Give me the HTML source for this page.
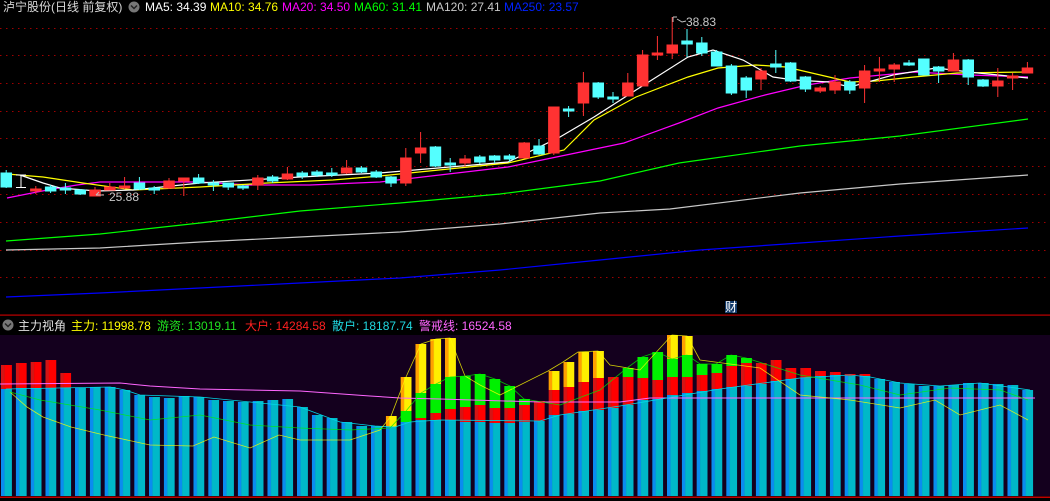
<!DOCTYPE html>
<html><head><meta charset="utf-8">
<style>
html,body{margin:0;padding:0;background:#000;width:1050px;height:501px;overflow:hidden}
svg{display:block}
text{font-family:"Liberation Sans","Noto Sans CJK SC",sans-serif;font-size:12px}
</style></head><body>
<svg width="1050" height="501" viewBox="0 0 1050 501" xmlns="http://www.w3.org/2000/svg">
<defs>
<pattern id="pc" x="1" y="0" width="14.8" height="501" patternUnits="userSpaceOnUse"><rect x="0" y="0" width="3.5" height="501" fill="#0a8cf0"/><rect x="3.5" y="0" width="7.5" height="501" fill="#00b8c8"/></pattern>
<pattern id="pr" x="1" y="0" width="14.8" height="501" patternUnits="userSpaceOnUse"><rect x="0" y="0" width="3.5" height="501" fill="#d41414"/><rect x="3.5" y="0" width="7.5" height="501" fill="#ff0000"/></pattern>
<pattern id="pg" x="1" y="0" width="14.8" height="501" patternUnits="userSpaceOnUse"><rect x="0" y="0" width="11" height="501" fill="#00f000"/></pattern>
<pattern id="py" x="1" y="0" width="14.8" height="501" patternUnits="userSpaceOnUse"><rect x="0" y="0" width="3.5" height="501" fill="#ffa000"/><rect x="3.5" y="0" width="7.5" height="501" fill="#ffee00"/></pattern>
</defs>
<rect width="1050" height="501" fill="#000"/>
<text x="3" y="11" fill="#d8d8d8">泸宁股份(日线 前复权)</text>
<circle cx="134" cy="7" r="5.5" fill="#777"/><path d="M131 5.5 L134 8.5 L137 5.5" stroke="#222" stroke-width="1.5" fill="none"/>
<text x="145" y="11" fill="#fff">MA5: 34.39</text>
<text x="210" y="11" fill="#ffff00">MA10: 34.76</text>
<text x="282" y="11" fill="#ff00ff">MA20: 34.50</text>
<text x="354" y="11" fill="#00ff00">MA60: 31.41</text>
<text x="426" y="11" fill="#c8c8c8">MA120: 27.41</text>
<text x="504" y="11" fill="#0022ff">MA250: 23.57</text>
<g stroke="#a00000" stroke-width="1" stroke-dasharray="1.5,4.5">
<line x1="0" y1="28.5" x2="1050" y2="28.5"/><line x1="0" y1="55.5" x2="1050" y2="55.5"/><line x1="0" y1="83.5" x2="1050" y2="83.5"/><line x1="0" y1="111.5" x2="1050" y2="111.5"/><line x1="0" y1="138.5" x2="1050" y2="138.5"/><line x1="0" y1="166.5" x2="1050" y2="166.5"/><line x1="0" y1="194.5" x2="1050" y2="194.5"/><line x1="0" y1="222.5" x2="1050" y2="222.5"/><line x1="0" y1="250.5" x2="1050" y2="250.5"/><line x1="0" y1="277.5" x2="1050" y2="277.5"/>
</g>
<g fill="none" stroke-width="1.2">
<polyline stroke="#0000ff" points="6,297 100,293 200,288 300,283 400,278 500,270 600,260 700,250 800,243 900,236 1028,228"/>
<polyline stroke="#c8c8c8" points="6,250 100,248 200,242 300,237 400,232 500,224 600,213 670,209 800,193 900,184 1028,175"/>
<polyline stroke="#00ff00" points="6,241 100,234 200,223 300,211 400,203 500,194 600,181 679,163 800,146 900,136 1028,119"/>
<polyline stroke="#ff00ff" points="7,198 37,192 53,189 77,185 100,182 200,182 250,185 310,185 380,182 508,167 542,160 624,143 679,123 718,108 765,95 807,85 850,78 914,72 970,75 1028,77"/>
<polyline stroke="#ffff00" points="7,174 43,177 83,183 133,190 200,187 267,183 333,180 380,176 508,163 564,150 594,120 636,97 688,77 718,68 756,65 786,67 829,77 850,82 876,81 914,77 957,73 1028,72"/>
<polyline stroke="#ffffff" points="20,175 43,183 60,188 97,191 133,190 200,183 300,177 380,173 508,162 560,137 594,117 636,90 688,57 713,50 743,60 773,77 794,80 829,82 850,87 893,75 936,68 978,73 1028,78"/>
</g>
<g stroke-width="1">
<g fill="#54ffff" stroke="#54ffff">
<line x1="6.2" y1="170" x2="6.2" y2="188"/><rect x="1" y="173" width="10.5" height="14"/>
<line x1="50.6" y1="185" x2="50.6" y2="193"/><rect x="45.4" y="187" width="10.5" height="4"/>
<line x1="65.4" y1="183" x2="65.4" y2="194"/><rect x="60.2" y="188" width="10.5" height="2"/>
<line x1="80.2" y1="189" x2="80.2" y2="195"/><rect x="75" y="190" width="10.5" height="4"/>
<line x1="139.4" y1="177" x2="139.4" y2="190"/><rect x="134.2" y="183" width="10.5" height="6"/>
<line x1="154.2" y1="186" x2="154.2" y2="194"/><rect x="149" y="188" width="10.5" height="2"/>
<line x1="198.6" y1="174" x2="198.6" y2="184"/><rect x="193.4" y="178" width="10.5" height="5"/>
<line x1="213.4" y1="180" x2="213.4" y2="191"/><rect x="208.2" y="183" width="10.5" height="2"/>
<line x1="228.2" y1="183" x2="228.2" y2="190"/><rect x="223" y="183" width="10.5" height="4"/>
<line x1="243" y1="185" x2="243" y2="190"/><rect x="237.8" y="186" width="10.5" height="2"/>
<line x1="272.6" y1="175" x2="272.6" y2="183"/><rect x="267.4" y="177" width="10.5" height="4"/>
<line x1="302.2" y1="171" x2="302.2" y2="179"/><rect x="297" y="173" width="10.5" height="3"/>
<line x1="317" y1="170" x2="317" y2="177"/><rect x="311.8" y="172" width="10.5" height="3"/>
<line x1="331.8" y1="168" x2="331.8" y2="177"/><rect x="326.6" y="173" width="10.5" height="2"/>
<line x1="361.4" y1="166" x2="361.4" y2="173"/><rect x="356.2" y="168" width="10.5" height="4"/>
<line x1="376.2" y1="170" x2="376.2" y2="178"/><rect x="371" y="172" width="10.5" height="5"/>
<line x1="391" y1="176" x2="391" y2="187"/><rect x="385.8" y="177" width="10.5" height="6"/>
<line x1="435.4" y1="146" x2="435.4" y2="167"/><rect x="430.2" y="147" width="10.5" height="19"/>
<line x1="450.2" y1="158" x2="450.2" y2="172"/><rect x="445" y="163" width="10.5" height="2"/>
<line x1="479.8" y1="155" x2="479.8" y2="164"/><rect x="474.6" y="157" width="10.5" height="5"/>
<line x1="494.6" y1="155" x2="494.6" y2="163"/><rect x="489.4" y="156" width="10.5" height="4"/>
<line x1="509.4" y1="154" x2="509.4" y2="162"/><rect x="504.2" y="156" width="10.5" height="3"/>
<line x1="539" y1="139" x2="539" y2="155"/><rect x="533.8" y="146" width="10.5" height="8"/>
<line x1="568.6" y1="106" x2="568.6" y2="117"/><rect x="563.4" y="109" width="10.5" height="2"/>
<line x1="598.2" y1="82" x2="598.2" y2="99"/><rect x="593" y="83" width="10.5" height="14"/>
<line x1="613" y1="92" x2="613" y2="103"/><rect x="607.8" y="97" width="10.5" height="2"/>
<line x1="687" y1="29" x2="687" y2="57"/><rect x="681.8" y="41" width="10.5" height="3"/>
<line x1="701.8" y1="37" x2="701.8" y2="56"/><rect x="696.6" y="43" width="10.5" height="10"/>
<line x1="716.6" y1="50" x2="716.6" y2="66"/><rect x="711.4" y="52" width="10.5" height="14"/>
<line x1="731.4" y1="64" x2="731.4" y2="95"/><rect x="726.2" y="66" width="10.5" height="27"/>
<line x1="746.2" y1="76" x2="746.2" y2="98"/><rect x="741" y="78" width="10.5" height="12"/>
<line x1="775.8" y1="50" x2="775.8" y2="73"/><rect x="770.6" y="64" width="10.5" height="3"/>
<line x1="790.6" y1="62" x2="790.6" y2="82"/><rect x="785.4" y="63" width="10.5" height="18"/>
<line x1="805.4" y1="76" x2="805.4" y2="92"/><rect x="800.2" y="77" width="10.5" height="12"/>
<line x1="849.8" y1="80" x2="849.8" y2="94"/><rect x="844.6" y="82" width="10.5" height="8"/>
<line x1="909" y1="60" x2="909" y2="66"/><rect x="903.8" y="63" width="10.5" height="2"/>
<line x1="923.8" y1="59" x2="923.8" y2="75"/><rect x="918.6" y="59" width="10.5" height="16"/>
<line x1="938.6" y1="66" x2="938.6" y2="83"/><rect x="933.4" y="67" width="10.5" height="4"/>
<line x1="968.2" y1="59" x2="968.2" y2="85"/><rect x="963" y="60" width="10.5" height="17"/>
<line x1="983" y1="79" x2="983" y2="87"/><rect x="977.8" y="80" width="10.5" height="6"/>
</g>
<g fill="#ff3232" stroke="#ff3232">
<line x1="35.8" y1="186" x2="35.8" y2="194"/><rect x="30.6" y="189" width="10.5" height="2"/>
<line x1="95" y1="187" x2="95" y2="196"/><rect x="89.8" y="190" width="10.5" height="6"/>
<line x1="109.8" y1="183" x2="109.8" y2="190"/><rect x="104.6" y="187" width="10.5" height="3"/>
<line x1="124.6" y1="177" x2="124.6" y2="189"/><rect x="119.4" y="186" width="10.5" height="2"/>
<line x1="169" y1="178" x2="169" y2="189"/><rect x="163.8" y="181" width="10.5" height="7"/>
<line x1="183.8" y1="178" x2="183.8" y2="196"/><rect x="178.6" y="178" width="10.5" height="3"/>
<line x1="257.8" y1="175" x2="257.8" y2="190"/><rect x="252.6" y="178" width="10.5" height="7"/>
<line x1="287.4" y1="167" x2="287.4" y2="180"/><rect x="282.2" y="174" width="10.5" height="5"/>
<line x1="346.6" y1="160" x2="346.6" y2="174"/><rect x="341.4" y="168" width="10.5" height="5"/>
<line x1="405.8" y1="148" x2="405.8" y2="186"/><rect x="400.6" y="158" width="10.5" height="25"/>
<line x1="420.6" y1="132" x2="420.6" y2="163"/><rect x="415.4" y="148" width="10.5" height="5"/>
<line x1="465" y1="155" x2="465" y2="167"/><rect x="459.8" y="159" width="10.5" height="4"/>
<line x1="524.2" y1="142" x2="524.2" y2="158"/><rect x="519" y="143" width="10.5" height="15"/>
<line x1="553.8" y1="107" x2="553.8" y2="155"/><rect x="548.6" y="107" width="10.5" height="46"/>
<line x1="583.4" y1="72" x2="583.4" y2="116"/><rect x="578.2" y="83" width="10.5" height="20"/>
<line x1="627.8" y1="73" x2="627.8" y2="96"/><rect x="622.6" y="83" width="10.5" height="13"/>
<line x1="642.6" y1="50" x2="642.6" y2="86"/><rect x="637.4" y="55" width="10.5" height="31"/>
<line x1="657.4" y1="36" x2="657.4" y2="60"/><rect x="652.2" y="53" width="10.5" height="2"/>
<line x1="672.2" y1="17" x2="672.2" y2="59"/><rect x="667" y="45" width="10.5" height="8"/>
<line x1="761" y1="68" x2="761" y2="90"/><rect x="755.8" y="71" width="10.5" height="8"/>
<line x1="820.2" y1="86" x2="820.2" y2="93"/><rect x="815" y="88" width="10.5" height="3"/>
<line x1="835" y1="75" x2="835" y2="94"/><rect x="829.8" y="82" width="10.5" height="8"/>
<line x1="864.6" y1="65" x2="864.6" y2="103"/><rect x="859.4" y="71" width="10.5" height="17"/>
<line x1="879.4" y1="57" x2="879.4" y2="82"/><rect x="874.2" y="69" width="10.5" height="2"/>
<line x1="894.2" y1="63" x2="894.2" y2="82"/><rect x="889" y="65" width="10.5" height="4"/>
<line x1="953.4" y1="53" x2="953.4" y2="71"/><rect x="948.2" y="60" width="10.5" height="11"/>
<line x1="997.8" y1="68" x2="997.8" y2="97"/><rect x="992.6" y="81" width="10.5" height="5"/>
<line x1="1012.6" y1="73" x2="1012.6" y2="90"/><rect x="1007.4" y="76" width="10.5" height="2"/>
<line x1="1027.4" y1="62" x2="1027.4" y2="73"/><rect x="1022.2" y="68" width="10.5" height="5"/>
</g>
<g stroke="#fff" fill="none"><line x1="21" y1="175" x2="21" y2="187"/><line x1="16" y1="175" x2="26" y2="175"/><line x1="16" y1="187.5" x2="26" y2="187.5"/></g>
</g>
<path d="M673 17 L673 22 M673 17 L677 17 M677 19 L682 22 L686 21" stroke="#c0c0c0" fill="none"/>
<text x="686" y="26" fill="#c8c8c8">38.83</text>
<path d="M96 195 L104 195 M96 195 L99 192" stroke="#c0c0c0" fill="none"/>
<text x="109" y="201" fill="#c8c8c8">25.88</text>
<rect x="725" y="301" width="12" height="12" fill="#123a6a"/>
<text x="725" y="311" fill="#fff" font-size="11">财</text>
<rect x="0" y="314.5" width="1050" height="1.2" fill="#c00000"/>
<circle cx="8" cy="325" r="5.5" fill="#777"/><path d="M5 323.5 L8 326.5 L11 323.5" stroke="#222" stroke-width="1.5" fill="none"/>
<text x="18" y="330" fill="#e0e0e0">主力视角</text>
<text x="71" y="330" fill="#ffff00">主力: 11998.78</text>
<text x="157" y="330" fill="#20e020">游资: 13019.11</text>
<text x="245" y="330" fill="#ff2020">大户: 14284.58</text>
<text x="332" y="330" fill="#20d8e0">散户: 18187.74</text>
<text x="419" y="330" fill="#ff66ff">警戒线: 16524.58</text>
<rect x="0" y="335" width="1050" height="161" fill="#14001e"/>
<rect x="0" y="496.5" width="1050" height="1.5" fill="#c00000"/>
<g fill="url(#pc)">
<rect x="1" y="389" width="11" height="107"/><rect x="15.8" y="388" width="11" height="108"/><rect x="30.6" y="388" width="11" height="108"/><rect x="45.4" y="388" width="11" height="108"/><rect x="60.2" y="388" width="11" height="108"/><rect x="75" y="388" width="11" height="108"/><rect x="89.8" y="387" width="11" height="109"/><rect x="104.6" y="387" width="11" height="109"/><rect x="119.4" y="390" width="11" height="106"/><rect x="134.2" y="395" width="11" height="101"/><rect x="149" y="397" width="11" height="99"/><rect x="163.8" y="398" width="11" height="98"/><rect x="178.6" y="396" width="11" height="100"/><rect x="193.4" y="397" width="11" height="99"/><rect x="208.2" y="400" width="11" height="96"/><rect x="223" y="401" width="11" height="95"/><rect x="237.8" y="402" width="11" height="94"/><rect x="252.6" y="401" width="11" height="95"/><rect x="267.4" y="400" width="11" height="96"/><rect x="282.2" y="399" width="11" height="97"/><rect x="297" y="407" width="11" height="89"/><rect x="311.8" y="415" width="11" height="81"/><rect x="326.6" y="418" width="11" height="78"/><rect x="341.4" y="422" width="11" height="74"/><rect x="356.2" y="426" width="11" height="70"/><rect x="371" y="426" width="11" height="70"/><rect x="385.8" y="427" width="11" height="69"/><rect x="400.6" y="422" width="11" height="74"/><rect x="415.4" y="420" width="11" height="76"/><rect x="430.2" y="420" width="11" height="76"/><rect x="445" y="420" width="11" height="76"/><rect x="459.8" y="422" width="11" height="74"/><rect x="474.6" y="422" width="11" height="74"/><rect x="489.4" y="423" width="11" height="73"/><rect x="504.2" y="423" width="11" height="73"/><rect x="519" y="422" width="11" height="74"/><rect x="533.8" y="421" width="11" height="75"/><rect x="548.6" y="415" width="11" height="81"/><rect x="563.4" y="414" width="11" height="82"/><rect x="578.2" y="411" width="11" height="85"/><rect x="593" y="410" width="11" height="86"/><rect x="607.8" y="408" width="11" height="88"/><rect x="622.6" y="405" width="11" height="91"/><rect x="637.4" y="400" width="11" height="96"/><rect x="652.2" y="399" width="11" height="97"/><rect x="667" y="395" width="11" height="101"/><rect x="681.8" y="393" width="11" height="103"/><rect x="696.6" y="391" width="11" height="105"/><rect x="711.4" y="389" width="11" height="107"/><rect x="726.2" y="387" width="11" height="109"/><rect x="741" y="386" width="11" height="110"/><rect x="755.8" y="384" width="11" height="112"/><rect x="770.6" y="381" width="11" height="115"/><rect x="785.4" y="379" width="11" height="117"/><rect x="800.2" y="378" width="11" height="118"/><rect x="815" y="376" width="11" height="120"/><rect x="829.8" y="375" width="11" height="121"/><rect x="844.6" y="376" width="11" height="120"/><rect x="859.4" y="376" width="11" height="120"/><rect x="874.2" y="379" width="11" height="117"/><rect x="889" y="382" width="11" height="114"/><rect x="903.8" y="384" width="11" height="112"/><rect x="918.6" y="386" width="11" height="110"/><rect x="933.4" y="386" width="11" height="110"/><rect x="948.2" y="385" width="11" height="111"/><rect x="963" y="383" width="11" height="113"/><rect x="977.8" y="383" width="11" height="113"/><rect x="992.6" y="384" width="11" height="112"/><rect x="1007.4" y="385" width="11" height="111"/><rect x="1022.2" y="390" width="11" height="106"/>
</g>
<g fill="url(#pr)">
<rect x="1" y="365" width="11" height="24"/><rect x="15.8" y="363" width="11" height="25"/><rect x="30.6" y="362" width="11" height="26"/><rect x="45.4" y="360" width="11" height="28"/><rect x="60.2" y="373" width="11" height="15"/>
<rect x="415.4" y="418" width="11" height="2"/><rect x="430.2" y="413" width="11" height="7"/><rect x="445" y="409" width="11" height="11"/><rect x="459.8" y="407" width="11" height="15"/><rect x="474.6" y="405" width="11" height="17"/><rect x="489.4" y="408" width="11" height="15"/><rect x="504.2" y="408" width="11" height="15"/><rect x="519" y="405" width="11" height="17"/><rect x="533.8" y="401" width="11" height="20"/><rect x="548.6" y="390" width="11" height="25"/><rect x="563.4" y="387" width="11" height="27"/><rect x="578.2" y="382" width="11" height="29"/><rect x="593" y="378" width="11" height="32"/><rect x="607.8" y="377" width="11" height="31"/><rect x="622.6" y="377" width="11" height="28"/><rect x="637.4" y="378" width="11" height="22"/><rect x="652.2" y="380" width="11" height="19"/><rect x="667" y="377" width="11" height="18"/><rect x="681.8" y="377" width="11" height="16"/><rect x="696.6" y="375" width="11" height="16"/><rect x="711.4" y="373" width="11" height="16"/><rect x="726.2" y="366" width="11" height="21"/><rect x="741" y="363" width="11" height="23"/><rect x="755.8" y="363" width="11" height="21"/><rect x="770.6" y="360" width="11" height="21"/><rect x="785.4" y="368" width="11" height="11"/><rect x="800.2" y="368" width="11" height="10"/><rect x="815" y="371" width="11" height="5"/><rect x="829.8" y="372" width="11" height="3"/><rect x="844.6" y="374" width="11" height="2"/><rect x="859.4" y="374" width="11" height="2"/>
</g>
<g fill="url(#pg)">
<rect x="400.6" y="411" width="11" height="11"/><rect x="415.4" y="393" width="11" height="25"/><rect x="430.2" y="384" width="11" height="29"/><rect x="445" y="377" width="11" height="32"/><rect x="459.8" y="376" width="11" height="31"/><rect x="474.6" y="374" width="11" height="31"/><rect x="489.4" y="379" width="11" height="29"/><rect x="504.2" y="386" width="11" height="22"/><rect x="519" y="399" width="11" height="6"/>
<rect x="622.6" y="368" width="11" height="9"/><rect x="637.4" y="357" width="11" height="21"/><rect x="652.2" y="352" width="11" height="28"/><rect x="667" y="359" width="11" height="18"/><rect x="681.8" y="355" width="11" height="22"/><rect x="696.6" y="364" width="11" height="11"/><rect x="711.4" y="364" width="11" height="9"/><rect x="726.2" y="355" width="11" height="11"/><rect x="741" y="358" width="11" height="5"/>
</g>
<g fill="url(#py)">
<rect x="385.8" y="416" width="11" height="11"/><rect x="400.6" y="377" width="11" height="34"/><rect x="415.4" y="344" width="11" height="49"/><rect x="430.2" y="339" width="11" height="45"/><rect x="445" y="338" width="11" height="39"/>
<rect x="548.6" y="371" width="11" height="19"/><rect x="563.4" y="362" width="11" height="25"/><rect x="578.2" y="352" width="11" height="30"/><rect x="593" y="351" width="11" height="27"/>
<rect x="667" y="335" width="11" height="24"/><rect x="681.8" y="336" width="11" height="19"/>
</g>
<g fill="none" stroke-width="0.8">
<polyline stroke="#ff66ff" stroke-width="1" points="0,384 120,383 150,386 200,389 300,391 370,396 400,398 440,399 540,402 620,402 650,398 1035,398"/>
<polyline stroke="#00d8e8" points="6,389 110,387 125,390 140,395 200,397 300,407 340,422 375,426 395,427 410,422 440,420 540,421 560,415 620,406 720,389 800,378 850,375 870,377 900,383 940,386 980,383 1030,390"/>
<polyline stroke="#ffff00" stroke-opacity="0.8" points="10,392 27,407 43,417 71,427 104,435 150,445 193,446 214,437 250,448 279,435 300,440 350,440 380,430 391,416 406,377 421,344 436,339 450,338 465,376 480,385 500,395 548,371 563,362 578,352 598,351 610,365 640,370 672,335 687,336 700,360 760,368 800,395 850,400 900,408 935,400 960,415 1000,405 1028,420"/>
<polyline stroke="#00ee00" stroke-opacity="0.8" points="10,392 40,400 100,410 150,420 200,415 250,425 300,428 350,430 390,428 406,411 421,393 436,384 450,377 465,376 480,374 495,379 510,386 524,399 560,405 600,390 627,368 642,357 657,352 672,359 687,355 700,364 716,364 731,355 746,358 800,375 860,385 900,395 950,388 1000,390 1028,400"/>
</g>
</svg>
</body></html>
